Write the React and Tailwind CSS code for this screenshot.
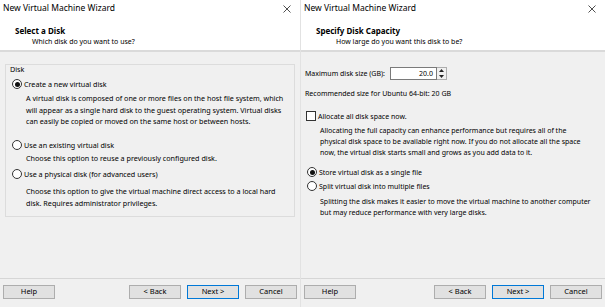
import React from "react";

const Radio = ({ checked }) => (
  <span className="w-[10px] h-[10px] rounded-full border border-[#333] bg-white flex items-center justify-center shrink-0">
    {checked && <span className="w-[5px] h-[5px] rounded-full bg-[#111]" />}
  </span>
);

const Button = ({ children, primary }) => (
  <button
    className={
      "h-[14px] w-[52px] text-[7.5px] leading-none bg-[#e1e1e1] border " +
      (primary ? "border-[#0078d7]" : "border-[#adadad]")
    }
  >
    {children}
  </button>
);

const Window = ({ title, subtitle, subIndent, children }) => (
  <div className="flex flex-col h-[307px] flex-1 bg-[#f0f0f0]">
    <div className="bg-white h-[17px] flex items-center justify-between pl-[3px] pr-[9px]">
      <span className="text-[8.5px] leading-none">New Virtual Machine Wizard</span>
      <svg width="8" height="8" viewBox="0 0 8 8">
        <path d="M0.5 0.5L7.5 7.5M7.5 0.5L0.5 7.5" stroke="#222" strokeWidth="0.8" />
      </svg>
    </div>
    <div className="bg-white h-[33px] pt-[7.5px] pl-[15px] leading-[11px]">
      <div className="text-[8px] font-bold">{title}</div>
      <div className={"text-[7px] " + subIndent}>{subtitle}</div>
    </div>
    <div className="h-[2px] bg-[#dadada]" />
    <div className="flex-1 flex flex-col">{children}</div>
    <div className="h-[1px] bg-[#d6d6d6]" />
    <div className="h-[28px] flex items-start pt-[6px] pl-[3px] pr-[3px]">
      <Button>Help</Button>
      <div className="flex-1" />
      <div className="flex gap-[6px]">
        <Button>&lt; Back</Button>
        <Button primary>Next &gt;</Button>
        <Button>Cancel</Button>
      </div>
    </div>
  </div>
);

export default function App() {
  return (
    <div className="w-[605px] h-[307px] flex bg-[#f0f0f0] text-black font-['Noto_Sans',sans-serif] overflow-hidden">
      <div className="w-[300px] flex">
        <Window title="Select a Disk" subtitle="Which disk do you want to use?" subIndent="pl-[17px]">
          <div className="mt-[12px] mx-[5px] h-[153px] border border-[#dcdcdc] text-[7.2px]">
            <div className="pl-[4px] leading-[8px]">Disk</div>
            <div className="pl-[6px] mt-[6px] flex items-center gap-[2px] h-[10px] leading-[10px]">
              <Radio checked />
              <span>Create a new virtual disk</span>
            </div>
            <div className="pl-[20px] mt-[4px] leading-[11.5px]">
              A virtual disk is composed of one or more files on the host file system, which
              <br />
              will appear as a single hard disk to the guest operating system. Virtual disks
              <br />
              can easily be copied or moved on the same host or between hosts.
            </div>
            <div className="pl-[6px] mt-[12px] flex items-center gap-[2px] h-[10px] leading-[10px]">
              <Radio />
              <span>Use an existing virtual disk</span>
            </div>
            <div className="pl-[20px] mt-[3px] leading-[11.5px]">Choose this option to reuse a previously configured disk.</div>
            <div className="pl-[6px] mt-[5px] flex items-center gap-[2px] h-[10px] leading-[10px]">
              <Radio />
              <span>Use a physical disk (for advanced users)</span>
            </div>
            <div className="pl-[20px] mt-[7px] leading-[11.5px]">
              Choose this option to give the virtual machine direct access to a local hard
              <br />
              disk. Requires administrator privileges.
            </div>
          </div>
        </Window>
      </div>
      <div className="w-[1px] bg-[#e2e2e2]" />
      <div className="flex-1 flex">
        <Window title="Specify Disk Capacity" subtitle="How large do you want this disk to be?" subIndent="pl-[20px]">
          <div className="px-[4px] text-[7px] leading-[11px]">
            <div className="mt-[15px] flex items-center h-[13px]">
              <span className="w-[85px]">Maximum disk size (GB):</span>
              <div className="w-[47px] h-[13px] bg-white border border-[#7a7a7a] flex items-center justify-end pr-[3px]">
                20.0
              </div>
              <div className="w-[10px] h-[13px] border border-l-0 border-[#adadad] bg-[#f0f0f0] flex flex-col items-center justify-around">
                <svg width="5" height="3" viewBox="0 0 5 3"><path d="M0 3L2.5 0L5 3Z" fill="#222" /></svg>
                <svg width="5" height="3" viewBox="0 0 5 3"><path d="M0 0L2.5 3L5 0Z" fill="#222" /></svg>
              </div>
            </div>
            <div className="mt-[7.5px]">Recommended size for Ubuntu 64-bit: 20 GB</div>
            <div className="mt-[12.5px] flex items-center gap-[2px] h-[10px] pl-[1px]">
              <span className="w-[10px] h-[10px] border border-[#333] bg-white shrink-0" />
              <span>Allocate all disk space now.</span>
            </div>
            <div className="pl-[15px] mt-[3.5px]">
              Allocating the full capacity can enhance performance but requires all of the
              <br />
              physical disk space to be available right now. If you do not allocate all the space
              <br />
              now, the virtual disk starts small and grows as you add data to it.
            </div>
            <div className="mt-[9.5px] flex items-center gap-[2px] h-[10px] pl-[2px]">
              <Radio checked />
              <span>Store virtual disk as a single file</span>
            </div>
            <div className="mt-[4px] flex items-center gap-[2px] h-[10px] pl-[2px]">
              <Radio />
              <span>Split virtual disk into multiple files</span>
            </div>
            <div className="pl-[15px] mt-[4.5px]">
              Splitting the disk makes it easier to move the virtual machine to another computer
              <br />
              but may reduce performance with very large disks.
            </div>
          </div>
        </Window>
      </div>
    </div>
  );
}
